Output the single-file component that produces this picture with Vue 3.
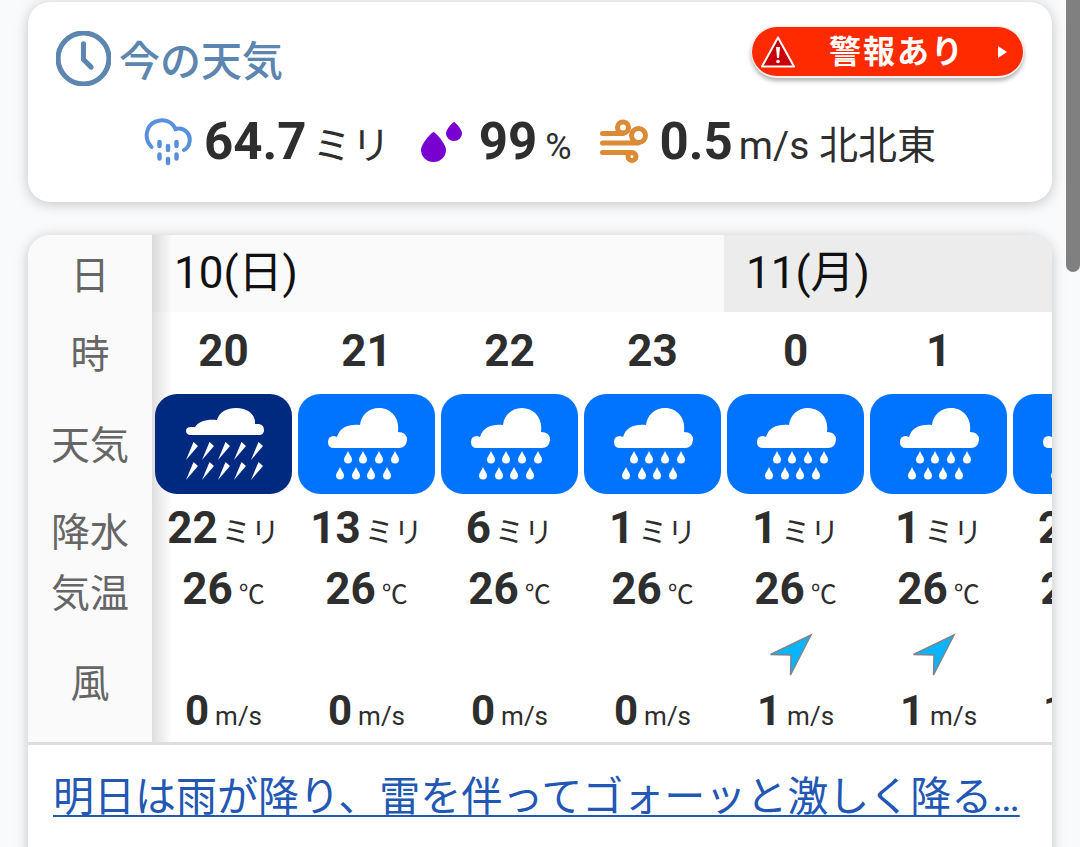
<template>
  <div class="page">
    <section class="card now">
      <header class="now-head">
        <h2 class="now-title">
          <svg class="clock" viewBox="0 0 54 54" fill="none" stroke="currentColor" stroke-linecap="round" stroke-linejoin="round">
            <circle cx="27" cy="27" r="25" stroke-width="5" />
            <path d="M27 12.500V28L34.500 35.500" stroke-width="5" />
          </svg>
          <span class="now-name">今の天気</span>
        </h2>
        <button class="alert-btn" type="button">
          <svg class="alert-icon" viewBox="0 0 36 34">
            <path d="M18 2.500L34 31.500H2Z" fill="#c8000a" stroke="#fff" stroke-width="2" stroke-linejoin="round" />
            <path d="M16 12h4l-1 11h-2z" fill="#fff" />
            <circle cx="18" cy="26.500" r="1.800" fill="#fff" />
          </svg>
          <span class="alert-text">警報あり</span>
          <svg class="alert-arrow" viewBox="0 0 9 14"><path d="M0 1L9 7L0 13Z" fill="#fff" /></svg>
        </button>
      </header>

      <div class="now-values">
        <div class="metric">
          <svg class="icon" viewBox="0 0 48 48" fill="none" stroke="#5990dc" stroke-linecap="round">
            <path d="M7.500 29C-1 20 2 4 16 2.500C23 1.500 29 5 31.500 11C41 8.500 47 17 45.500 24C44.800 28 42.500 31 40 32" stroke-width="4" />
            <path d="M15.500 24v4M24 28v4M32.500 24v4M15.500 36.500v4M24 41v4M32.500 36.500v4" stroke-width="4.500" />
          </svg>
          <strong class="num">64.7</strong><span class="unit">ミリ</span>
        </div>
        <div class="metric">
          <svg class="icon" viewBox="0 0 48 48" fill="#7800d0">
            <path d="M14.500 14C16 14 27 25.500 27 32A12.500 12 0 0 1 2 32C2 25.500 13 14 14.500 14Z" />
            <path d="M35 4C36 4 43 11 43 15.500A8 7.500 0 0 1 27 15.500C27 11 34 4 35 4Z" />
          </svg>
          <strong class="num">99</strong><span class="unit percent">%</span>
        </div>
        <div class="metric">
          <svg class="icon" viewBox="0 0 48 48" fill="none" stroke="#dc8a35" stroke-width="5" stroke-linecap="round">
            <path d="M2.500 15.500H23" />
            <circle cx="23" cy="9.500" r="5.500" />
            <path d="M2.500 25H38" />
            <circle cx="38.500" cy="17.500" r="7" />
            <path d="M2.500 34.500H31" />
            <circle cx="32" cy="38.500" r="4" />
          </svg>
          <strong class="num">0.5</strong><span class="unit">m/s 北北東</span>
        </div>
      </div>
    </section>

    <section class="card forecast">
      <div class="scroller">
        <table class="hourly">
          <colgroup>
            <col class="col-label" />
            <col v-for="h in hours" :key="h.hour" class="col-hour" />
          </colgroup>
          <tbody>
            <tr class="row-day">
              <th class="label" scope="row">日</th>
              <th v-for="day in days" :key="day.name" class="day" :colspan="day.span" scope="colgroup">{{ day.name }}</th>
            </tr>
            <tr class="row-hour">
              <th class="label" scope="row">時</th>
              <th v-for="h in hours" :key="h.hour" class="hour" scope="col">{{ h.hour }}</th>
            </tr>
            <tr class="row-weather">
              <th class="label" scope="row">天気</th>
              <td v-for="h in hours" :key="h.hour">
                <div class="tile" :class="{ heavy: h.heavy }">
                  <svg v-if="h.heavy" viewBox="0 0 137 100" fill="#fff">
                    <path d="M35 41Q31 40 31 37Q31 33 36 33H40C44 27 52 25 62 26C64 18 72 14 81 14C92 14 101 20 100 30H104Q109 31 109 36Q109 41 104 41Z" />
                    <path v-for="p in streaks" :key="p" d="M7.500 0L12 4L0 18Z" :transform="`translate(${p})`" />
                  </svg>
                  <svg v-else viewBox="0 0 137 100" fill="#fff">
                    <path d="M36 54Q30 54 30 48Q30 42 36 42L39 43C42 33 51 30 62 31C63 21 71 14 81 14C93 14 102 24 100 38Q109 38 109 46Q108 54 101 54Z" />
                    <path v-for="p in drops" :key="p" d="M4 0C5 3 8 6 8 8.500A4 4 0 0 1 0 8.500C0 6 3 3 4 0Z" :transform="`translate(${p})`" />
                  </svg>
                </div>
              </td>
            </tr>
            <tr class="row-rain">
              <th class="label" scope="row">降水</th>
              <td v-for="h in hours" :key="h.hour"><b>{{ h.rain }}</b><span class="mm">ミリ</span></td>
            </tr>
            <tr class="row-temp">
              <th class="label" scope="row">気温</th>
              <td v-for="h in hours" :key="h.hour"><b>{{ h.temp }}</b><span class="deg">℃</span></td>
            </tr>
            <tr class="row-wind">
              <th class="label" scope="row">風</th>
              <td v-for="h in hours" :key="h.hour">
                <div class="arrow-box">
                  <svg v-if="h.wind > 0" class="arrow" viewBox="0 0 44 44">
                    <path d="M42 2L1.500 21.500L22 22L21.500 42Z" fill="#0ab4fa" stroke="#7b858c" stroke-width="1.500" />
                  </svg>
                </div>
                <div class="speed"><b>{{ h.wind }}</b><span class="ms">m/s</span></div>
              </td>
            </tr>
          </tbody>
        </table>
      </div>
      <div class="news">
        <a href="#">明日は雨が降り、雷を伴ってゴォーッと激しく降る…</a>
      </div>
    </section>

    <div class="scroll-thumb"></div>
  </div>
</template>

<script setup>
const days = [
  { name: '10(日)', span: 4 },
  { name: '11(月)', span: 3 }
]

const hours = [
  { hour: 20, rain: 22, temp: 26, wind: 0, heavy: true },
  { hour: 21, rain: 13, temp: 26, wind: 0 },
  { hour: 22, rain: 6, temp: 26, wind: 0 },
  { hour: 23, rain: 1, temp: 26, wind: 0 },
  { hour: 0, rain: 1, temp: 26, wind: 1 },
  { hour: 1, rain: 1, temp: 26, wind: 1 },
  { hour: 2, rain: 2, temp: 26, wind: 1 }
]

// x,y of each mark under the clouds
const streaks = [48, 68].flatMap(y => [31, 47, 63, 79, 96].map(x => `${x},${y}`))
const drops = [
  ...[46, 61, 77, 93].map(x => `${x},57`),
  ...[38, 54, 69, 85].map(x => `${x},73`)
]
</script>

<style>
body {
  margin: 0;
  background: #f9fafc;
}
</style>

<style scoped>
.page {
  position: relative;
  box-sizing: border-box;
  height: 100vh;
  padding: 2px 28px 0;
  overflow: hidden;
  background: #f9fafc;
  color: #2e2e2e;
  font-family: Roboto, "Noto Sans CJK JP", sans-serif;
}

.card {
  border-radius: 22px;
  background: #fff;
  box-shadow: 0 2px 14px rgba(0, 0, 0, 0.22);
}

.now {
  padding: 24px 28px;
}

.now-head {
  display: flex;
  align-items: flex-start;
  justify-content: space-between;
}

.now-title {
  display: flex;
  align-items: center;
  gap: 8px;
  margin: 0;
  color: #5c85b0;
  font-size: 41px;
  font-weight: 500;
  line-height: 56px;
}

.now-name {
  padding-top: 8px;
}

.clock {
  width: 55px;
  height: 55px;
}

.alert-btn {
  display: flex;
  align-items: center;
  justify-content: space-between;
  width: 273px;
  height: 52px;
  padding: 0 16px 0 8px;
  border: 1px solid #fff0ec;
  border-bottom-width: 2px;
  border-radius: 26px;
  background: #ff2a00;
  box-shadow: 0 3px 4px rgba(0, 0, 0, 0.3);
  color: #fff;
  font-family: inherit;
  font-size: 32px;
  font-weight: 700;
  line-height: 46px;
  cursor: pointer;
}

.alert-icon {
  width: 36px;
  height: 34px;
}

.alert-text {
  letter-spacing: 2px;
}

.alert-arrow {
  width: 9px;
  height: 14px;
}

.now-values {
  display: flex;
  justify-content: center;
  gap: 28px;
  margin-top: 20px;
}

.metric {
  display: flex;
  align-items: baseline;
  height: 68px;
  line-height: 64px;
  white-space: nowrap;
}

.icon {
  align-self: flex-start;
  width: 48px;
  height: 48px;
  margin-top: 8px;
  margin-right: 12px;
}

.num {
  margin-right: 6px;
  font-size: 51px;
}

.unit {
  font-size: 39px;
}

.percent {
  padding-left: 2px;
  font-size: 36px;
}

.forecast {
  height: 100vh;
  margin-top: 33px;
}

.scroller {
  overflow-x: auto;
  scrollbar-width: none;
  border-radius: 22px 22px 0 0;
  border-bottom: 3px solid #ddd;
}

.hourly {
  width: 1125px;
  table-layout: fixed;
  border-collapse: collapse;
}

.col-label {
  width: 124px;
}

.col-hour {
  width: 143px;
}

th,
td {
  padding: 0;
  line-height: 44px;
  text-align: center;
  white-space: nowrap;
}

.label {
  position: sticky;
  left: 0;
  padding-top: 4px;
  background: #fafafa;
  color: #666;
  font-size: 39px;
  font-weight: 400;
}

.label + td,
.label + th {
  background-image: linear-gradient(to right, rgba(0, 0, 0, 0.13), transparent 20px);
}

.day {
  padding: 0 0 2px 22px;
  background-color: #fafafa;
  color: #111;
  font-size: 44px;
  font-weight: 400;
  text-align: left;
}

.day:last-child {
  background-color: #ececec;
}

.hour {
  padding-bottom: 4px;
}

.row-day {
  height: 77px;
}

.row-hour {
  height: 81px;
}

.row-weather {
  height: 102px;
}

.row-rain {
  height: 66px;
}

.row-temp {
  height: 60px;
}

.row-wind {
  height: 120px;
}

.row-rain th,
.row-rain td {
  padding-top: 10px;
}

.row-temp th,
.row-temp td {
  padding-top: 6px;
}

.hour,
b {
  font-size: 44px;
  font-weight: 700;
}

.tile {
  margin: 0 3px;
  overflow: hidden;
  border-radius: 22px;
  background: #0073ff;
}

.tile.heavy {
  background: #002a80;
}

.tile svg {
  display: block;
  width: 100%;
  height: 100px;
}

.mm {
  margin-left: 4px;
  font-size: 29px;
}

.deg,
.ms {
  margin-left: 6px;
  font-size: 26px;
}

.row-wind td {
  vertical-align: top;
}

.arrow-box {
  height: 56px;
  padding: 12px 10px 0 0;
}

.arrow {
  display: block;
  width: 44px;
  height: 44px;
  margin: 0 auto;
}

.speed b {
  font-size: 42px;
}

.news {
  padding: 20px 25px;
  overflow: hidden;
  font-size: 41px;
  line-height: 64px;
  white-space: nowrap;
}

.news a {
  color: #2257b4;
  text-decoration-thickness: 2px;
  text-underline-offset: 4px;
  text-decoration-skip-ink: none;
}

.scroll-thumb {
  position: absolute;
  top: -14px;
  right: 0;
  width: 14px;
  height: 286px;
  border-radius: 7px;
  background: #808080;
}
</style>
